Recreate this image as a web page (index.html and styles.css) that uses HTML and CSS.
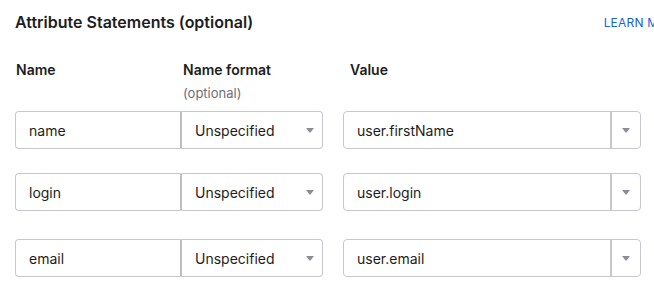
FILE: index.html
```html
<!DOCTYPE html>
<html lang="en">
<head>
  <meta charset="UTF-8" />
  <title>Attribute Statements</title>
  <link rel="stylesheet" href="styles.css">
</head>
<body>
  <section class="attr-section">
    <div class="section-head">
      <h3>Attribute Statements (optional)</h3>
      <a class="learn-more" href="#">LEARN MORE</a>
    </div>

    <div class="attr-row labels">
      <div class="col-name"><span class="label">Name</span></div>
      <div class="col-format"><span class="label">Name format</span><span class="hint">(optional)</span></div>
      <div class="col-value"><span class="label">Value</span></div>
    </div>

    <!-- rows -->
    <div class="attr-row field-row">
      <input class="text-input col-name" type="text" value="name" />
      <div class="select col-format"><span>Unspecified</span><span class="caret"></span></div>
      <div class="combo col-value"><input class="combo-input" type="text" value="user.firstName" /><span class="combo-btn"><span class="caret"></span></span></div>
    </div>

    <div class="attr-row field-row">
      <input class="text-input col-name" type="text" value="login" />
      <div class="select col-format"><span>Unspecified</span><span class="caret"></span></div>
      <div class="combo col-value"><input class="combo-input" type="text" value="user.login" /><span class="combo-btn"><span class="caret"></span></span></div>
    </div>

    <div class="attr-row field-row">
      <input class="text-input col-name" type="text" value="email" />
      <div class="select col-format"><span>Unspecified</span><span class="caret"></span></div>
      <div class="combo col-value"><input class="combo-input" type="text" value="user.email" /><span class="combo-btn"><span class="caret"></span></span></div>
    </div>
  </section>
</body>
</html>
```

FILE: styles.css
```css
* {
  box-sizing: border-box;
}
body {
  margin: 0;
  background: #ffffff;
  font-family: 'Inter', 'Roboto', sans-serif;
  color: #1d1d21;
  overflow: hidden;
}
.attr-section {
  padding: 12px 0 0 15px;
  width: 700px;
}
.section-head {
  display: flex;
  align-items: center;
  justify-content: space-between;
  height: 20px;
}
h3 {
  margin: 0;
  font-size: 16px;
  font-weight: 600;
  color: #1d1d21;
}
.learn-more {
  flex-shrink: 0;
  margin-right: 17px;
  font-size: 12px;
  color: #1662dd;
  text-decoration: none;
  letter-spacing: 0.2px;
  white-space: nowrap;
}
.attr-row {
  display: flex;
}
.labels {
  margin-top: 28px;
  height: 51px;
}
.labels > div {
  display: flex;
  flex-direction: column;
}
.label {
  font-size: 14px;
  font-weight: 600;
  line-height: 20px;
}
.col-name .label {
  padding-left: 1px;
}
.col-format .label, .hint {
  padding-left: 2px;
}
.col-value .label {
  padding-left: 7px;
}
.hint {
  margin-top: 4px;
  font-size: 13px;
  color: #6e6e78;
  line-height: 18px;
}
.col-name {
  width: 166px;
}
.col-format {
  width: 142px;
  margin-right: 20px;
}
.col-value {
  width: 298px;
}
.field-row {
  height: 38px;
  margin-bottom: 24px;
}
.field-row:nth-of-type(4) {
  margin-bottom: 28px;
}
.text-input, .select, .combo {
  height: 38px;
  border: 1px solid #c8c8cc;
  font-family: inherit;
  font-size: 14px;
  color: #1d1d21;
}
.text-input {
  padding: 0 13px;
  border-radius: 4px 0 0 4px;
  border-right-color: #bdbdc2;
  outline: none;
}
.select {
  display: flex;
  align-items: center;
  justify-content: space-between;
  padding: 0 8px 0 13px;
  border-left: 1px solid #bdbdc2;
  border-radius: 0 4px 4px 0;
}
.combo {
  display: flex;
  border-radius: 4px;
}
.combo-input {
  flex: 1;
  min-width: 0;
  border: none;
  padding: 0 13px;
  font-family: inherit;
  font-size: 14px;
  color: #1d1d21;
  background: transparent;
  outline: none;
}
.combo-btn {
  width: 30px;
  display: flex;
  align-items: center;
  justify-content: center;
  border-left: 2px solid #c8c8cc;
}
.caret {
  width: 0;
  height: 0;
  border-left: 4px solid transparent;
  border-right: 4px solid transparent;
  border-top: 5px solid #8c8c96;
}
```
